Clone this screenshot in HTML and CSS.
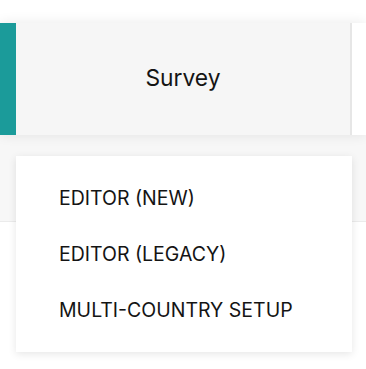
FILE: index.html
```html
<!DOCTYPE html>
<html>
<head>
<meta charset="utf-8">
<link rel="stylesheet" href="styles.css">
</head>
<body>
<div class="page">
  <div class="header">
    <div class="accent"></div>
    <div class="tab">Survey</div>
    <div class="rest"></div>
  </div>
  <div class="subbar"></div>
  <ul class="menu">
    <li class="item">EDITOR (NEW)</li>
    <li class="item">EDITOR (LEGACY)</li>
    <li class="item">MULTI-COUNTRY SETUP</li>
  </ul>
</div>
</body>
</html>
```
FILE: styles.css
```css
html, body {
  margin: 0;
  padding: 0;
  background: #ffffff;
  font-family: Inter, "Liberation Sans", sans-serif;
  color: #1a1a1a;
}
.page {
  position: relative;
  padding-top: 23px;
  width: 366px;
  height: 369px;
  box-sizing: border-box;
  overflow: hidden;
}
.header {
  position: relative;
  z-index: 2;
  display: flex;
  height: 112px;
  background: #ffffff;
  box-shadow: 0 0 12px rgba(0, 0, 0, 0.09);
}
.accent {
  width: 16px;
  background: #1b9b9a;
}
.tab {
  width: 336px;
  box-sizing: border-box;
  padding-bottom: 4px;
  background: #f6f6f6;
  border-right: 2px solid #e6e6e6;
  display: flex;
  align-items: center;
  justify-content: center;
  font-size: 22.8px;
  font-weight: 400;
  color: #141414;
}
.rest {
  flex: 1;
  background: #ffffff;
}
.subbar {
  position: relative;
  z-index: 1;
  height: 86px;
  background: #f7f7f7;
  border-bottom: 1px solid #ebebeb;
}
.menu {
  position: absolute;
  z-index: 3;
  top: 156px;
  left: 16px;
  width: 336px;
  margin: 0;
  padding: 14px 0;
  list-style: none;
  background: #ffffff;
  box-shadow: 0 2px 8px rgba(0, 0, 0, 0.1);
}
.item {
  height: 56px;
  display: flex;
  align-items: center;
  padding-left: 43px;
  font-size: 19.5px;
  color: #141414;
}
```
